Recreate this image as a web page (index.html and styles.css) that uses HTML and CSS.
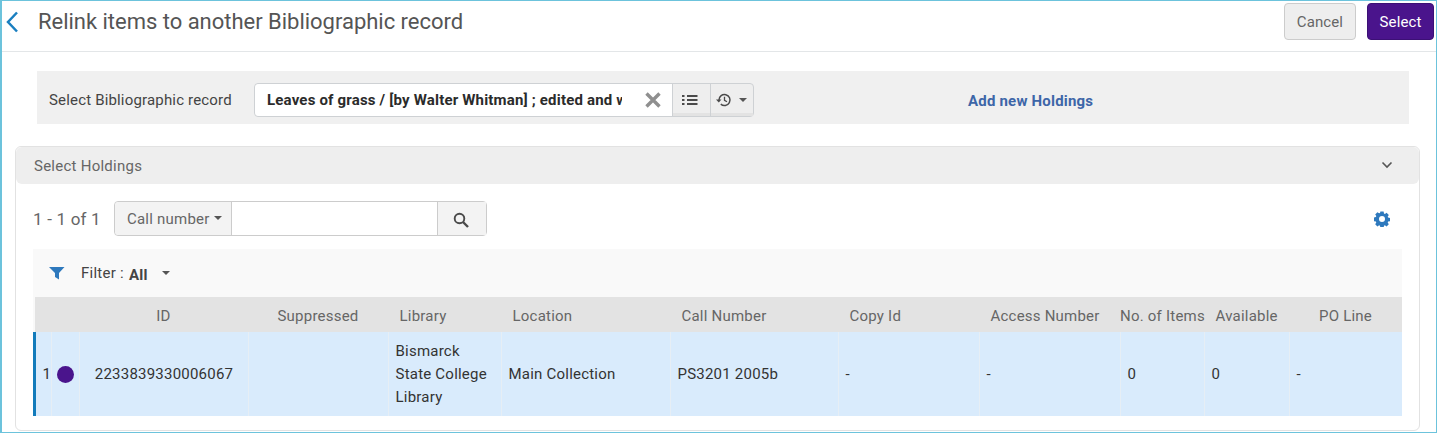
FILE: index.html
```html
<!DOCTYPE html>
<html lang="en">
<head>
<meta charset="utf-8">
<title>Relink items</title>
<link rel="stylesheet" href="styles.css">
</head>
<body>
<div class="frame">
  <header class="top">
    <a class="back"><svg width="14" height="22" viewBox="0 0 14 22"><path d="M12 1.500 3 11l9 9.500" fill="none" stroke="#1a7fc0" stroke-width="2.500"/></svg></a>
    <h1 class="title">Relink items to another Bibliographic record</h1>
    <button class="btn btn-cancel">Cancel</button>
    <button class="btn btn-select">Select</button>
  </header>
  <section class="picker">
    <span class="picker-label">Select Bibliographic record</span>
    <div class="combo">
      <div class="combo-field">
        <span class="combo-text">Leaves of grass / [by Walter Whitman] ; edited and with an introduction</span>
        <svg class="combo-x" width="18" height="18" viewBox="0 0 18 18"><path d="M2.500 2.500l13 13M15.500 2.500l-13 13" stroke="#8f8f8f" stroke-width="3.400" fill="none"/></svg>
      </div>
      <span class="combo-btn combo-list">
        <svg width="16" height="12" viewBox="0 0 16 12"><path d="M0 1h2.500v2H0zM0 5h2.500v2H0zM0 9h2.500v2H0zM5 1h10.500v2H5zM5 5h10.500v2H5zM5 9h10.500v2H5z" fill="#4a4a4a"/></svg>
      </span>
      <span class="combo-btn combo-hist">
        <svg width="16" height="14" viewBox="0 0 16 14"><path d="M3 7a5.500 5.500 0 1 1 1.800 4.100" fill="none" stroke="#4a4a4a" stroke-width="1.500"/><path d="M0 6.500h5.500L2.800 9.500z" fill="#4a4a4a"/><path d="M8.500 3.800V7.300l2.500 1.500" fill="none" stroke="#4a4a4a" stroke-width="1.300"/></svg>
        <i class="caret"></i>
      </span>
    </div>
    <a class="add-link">Add new Holdings</a>
  </section>
  <section class="panel">
    <div class="panel-head">
      <span>Select Holdings</span>
      <svg class="chev" width="12" height="8" viewBox="0 0 12 8"><path d="M1.500 1.500 6 6l4.500-4.500" fill="none" stroke="#555" stroke-width="1.600"/></svg>
    </div>
    <div class="panel-body">
      <div class="tools">
        <span class="count">1 - 1 of 1</span>
        <div class="search">
          <span class="search-type">Call number<i class="caret"></i></span>
          <span class="search-input"></span>
          <span class="search-go"><svg width="16" height="16" viewBox="0 0 16 16"><circle cx="6.500" cy="6.500" r="4.800" fill="none" stroke="#4a4a4a" stroke-width="1.900"/><path d="M10 10l5 5" stroke="#4a4a4a" stroke-width="2.400"/></svg></span>
        </div>
        <svg class="gear" width="16" height="16" viewBox="0 0 16 16"><path fill="#2e79bd" fill-rule="evenodd" d="M6.400.5h3.200l.4 2 .9.400 1.700-1.100 2.200 2.200-1.100 1.700.4.900 2 .4v3.200l-2 .4-.4.900 1.100 1.700-2.200 2.200-1.700-1.100-.9.400-.4 2H6.400l-.4-2-.9-.4-1.700 1.100-2.200-2.200 1.100-1.700-.4-.9-2-.4V6.400l2-.4.4-.9-1.100-1.700 2.200-2.200 1.700 1.100.9-.4zM8 5a3 3 0 1 0 0 6 3 3 0 0 0 0-6z"/></svg>
      </div>
      <div class="filter">
        <svg width="16" height="14" viewBox="0 0 16 14"><path d="M0 1h15.500L10 7v6.500L6 11V7z" fill="#2e79bd"/></svg>
        <span class="filter-label">Filter :</span>
        <b class="filter-value">All</b>
        <i class="caret"></i>
      </div>
      <table class="grid">
        <colgroup>
          <col class="c-num"><col class="c-dot"><col class="c-id"><col class="c-sup"><col class="c-lib"><col class="c-loc"><col class="c-call"><col class="c-copy"><col class="c-acc"><col class="c-items"><col class="c-avail"><col class="c-po">
        </colgroup>
        <thead>
          <tr>
            <th></th><th></th>
            <th class="center">ID</th>
            <th class="center">Suppressed</th>
            <th>Library</th>
            <th>Location</th>
            <th>Call Number</th>
            <th>Copy Id</th>
            <th>Access Number</th>
            <th class="flush">No. of Items</th>
            <th>Available</th>
            <th class="center">PO Line</th>
          </tr>
        </thead>
        <tbody>
          <tr>
            <td class="num">1</td>
            <td class="dot-cell"><span class="dot"></span></td>
            <td class="center">2233839330006067</td>
            <td></td>
            <td>Bismarck State College Library</td>
            <td>Main Collection</td>
            <td>PS3201 2005b</td>
            <td>-</td>
            <td>-</td>
            <td>0</td>
            <td>0</td>
            <td>-</td>
          </tr>
        </tbody>
      </table>
    </div>
  </section>
</div>
</body>
</html>
```
FILE: styles.css
```css
* { box-sizing: border-box; }
html, body { margin: 0; padding: 0; background: #fff; }
body { font-family: Roboto, "Liberation Sans", sans-serif; font-size: 15px; color: #333; }
.frame { width: 1437px; height: 433px; border: 1px solid #6cc3dc; border-left-width: 2px; overflow: hidden; }
.top { height: 51px; display: flex; align-items: flex-start; border-bottom: 1px solid #e3e6e8; padding: 2px 2px 0 3px; }
.back { margin-top: 8px; width: 33px; height: 22px; display: block; }
.title { margin: 4px auto 0 0; font-size: 22px; font-weight: 400; line-height: 30px; color: #555; letter-spacing: -.02px; }
.btn { height: 37px; font: 15px Roboto, sans-serif; border-radius: 4px; padding: 0; letter-spacing: .1px; }
.btn-cancel { width: 72px; background: #eee; border: 1px solid #ccc; color: #666; margin-right: 11px; }
.btn-select { width: 67px; background: #4a148c; border: 1px solid #3c1075; color: #fff; }
.picker { margin: 19px 0 0 35px; width: 1372px; height: 53px; background: #f0f0f0; display: flex; align-items: center; padding: 4px 0 0 12px; }
.picker-label { width: 205px; color: #444; letter-spacing: .17px; }
.combo { display: flex; height: 34px; width: 500px; border: 1px solid #ced1d4; border-radius: 4px; background: #eee; }
.combo-field { width: 418px; background: #fff; display: flex; align-items: center; padding-left: 12px; border-radius: 4px 0 0 4px; }
.combo-text { width: 355px; overflow: hidden; white-space: nowrap; font-weight: 700; font-size: 15px; letter-spacing: .18px; color: #2b2b2b; }
.combo-x { margin-left: 22px; }
.combo-btn { display: flex; align-items: center; justify-content: center; border-left: 1px solid #ced1d4; box-shadow: inset 0 -3px 0 #e3e3e3; }
.combo-list { width: 38px; padding-right: 4px; }
.combo-hist { width: 43px; gap: 7px; padding-right: 1px; }
.caret { display: inline-block; width: 0; height: 0; border: 4px solid transparent; border-top-color: #555; border-bottom-width: 0; }
.add-link { margin-left: 214px; margin-top: 2px; font-weight: 700; font-size: 15px; letter-spacing: .2px; color: #3d66a8; }
.panel { margin: 22px 0 0 13px; width: 1405px; height: 285px; border: 1px solid #e2e2e2; border-radius: 6px; }
.panel-head { height: 37px; background: #eee; border-radius: 6px; display: flex; align-items: center; justify-content: space-between; padding: 0 26px 0 18px; color: #666; font-size: 15px; letter-spacing: .25px; }
.chev { margin-top: -2px; }
.panel-body { padding: 0 17px; }
.tools { height: 65px; display: flex; align-items: center; }
.count { font-size: 17px; letter-spacing: .2px; color: #666; width: 81px; flex: none; padding-top: 5px; white-space: nowrap; }
.search { display: flex; width: 373px; height: 35px; border: 1px solid #ccc; border-radius: 4px; align-self: flex-start; margin-top: 17px; }
.search-type { width: 117px; background: #f3f3f3; border-right: 1px solid #ccc; display: flex; align-items: center; padding: 1px 0 0 12px; gap: 4px; color: #666; font-size: 15px; letter-spacing: .22px; border-radius: 4px 0 0 4px; }
.search-type .caret { margin-top: -2px; }
.search-input { width: 205px; }
.search-go { width: 49px; background: #f3f3f3; border-left: 1px solid #ccc; display: flex; align-items: center; justify-content: center; padding: 2px 3px 0 0; }
.gear { margin: 4px 12px 0 auto; }
.filter { height: 48px; background: #f9f9f9; display: flex; align-items: center; padding-left: 16px; color: #444; }
.filter-label { margin-left: 16px; font-size: 15px; letter-spacing: .25px; }
.filter-value { margin-left: 5px; margin-top: 3px; font-size: 15px; letter-spacing: .3px; }
.filter .caret { margin-left: 14px; }
.grid { width: 1369px; table-layout: fixed; border-collapse: separate; border-spacing: 0; }
.c-num { width: 18px; } .c-dot { width: 28px; } .c-id { width: 169px; } .c-sup { width: 140px; } .c-lib { width: 113px; } .c-loc { width: 169px; } .c-call { width: 168px; } .c-copy { width: 141px; } .c-acc { width: 141px; } .c-items { width: 84px; } .c-avail { width: 85px; } .c-po { width: 113px; }
.grid th { height: 35px; background: #e3e3e3; font-weight: 400; font-size: 15px; letter-spacing: .22px; color: #666; text-align: left; padding: 2px 0 0 11.5px; white-space: nowrap; }
.grid th.center { text-align: center; padding: 2px 0 0; }
.grid th.flush { padding: 2px 0 0; }
.grid th:first-child { box-shadow: inset 2px 0 0 #f9f9f9; }
.grid td { height: 84px; background: #d9ebfc; border-left: 1px solid #e6eef5; padding: 0 6px 0 6.500px; line-height: 23px; color: #333; font-size: 15px; letter-spacing: .22px; }
.grid td.center { text-align: center; padding: 0; }
.grid td.num { border-left: 3px solid #127bbb; padding: 0 0 0 6.500px; }
.grid td.dot-cell { padding: 0 0 0 5px; }
.dot { display: block; width: 17px; height: 17px; border-radius: 50%; background: #4a148c; }
```
